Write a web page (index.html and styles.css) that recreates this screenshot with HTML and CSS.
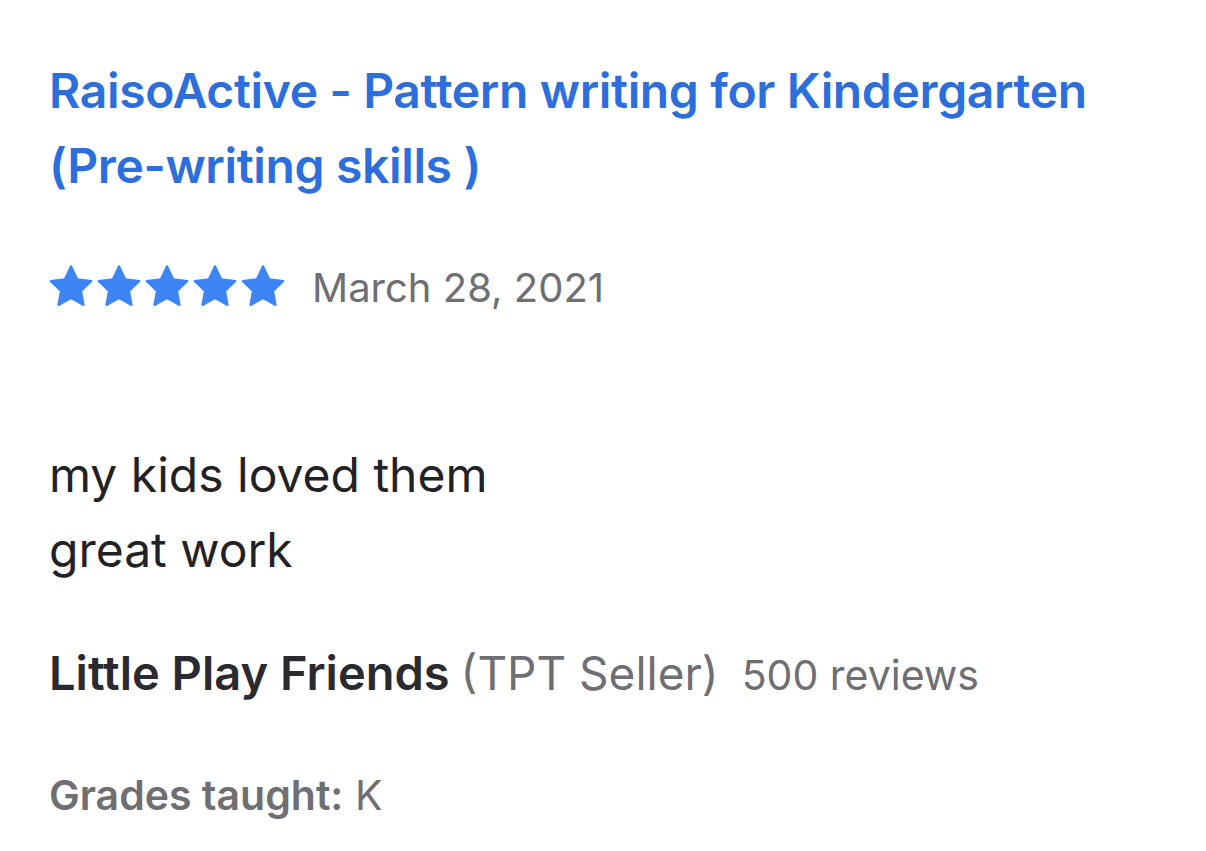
FILE: index.html
```html
<!DOCTYPE html>
<html>
<head>
<meta charset="utf-8">
<link rel="stylesheet" href="styles.css">
</head>
<body>
<div class="review">
  <h1 class="title">RaisoActive - Pattern writing for Kindergarten (Pre-writing skills )</h1>
  <div class="rating">
    <div class="stars">
      <svg class="star" viewBox="1.2 1.2 21.6 21.6"><path d="M12 1.8l3.05 6.35 6.95.95-5.05 4.85 1.25 6.9L12 17.5l-6.2 3.35 1.25-6.9L2 9.1l6.95-.95z" stroke="#3d85f5" stroke-width="1" stroke-linejoin="round"/></svg>
      <svg class="star" viewBox="1.2 1.2 21.6 21.6"><path d="M12 1.8l3.05 6.35 6.95.95-5.05 4.85 1.25 6.9L12 17.5l-6.2 3.35 1.25-6.9L2 9.1l6.95-.95z" stroke="#3d85f5" stroke-width="1" stroke-linejoin="round"/></svg>
      <svg class="star" viewBox="1.2 1.2 21.6 21.6"><path d="M12 1.8l3.05 6.35 6.95.95-5.05 4.85 1.25 6.9L12 17.5l-6.2 3.35 1.25-6.9L2 9.1l6.95-.95z" stroke="#3d85f5" stroke-width="1" stroke-linejoin="round"/></svg>
      <svg class="star" viewBox="1.2 1.2 21.6 21.6"><path d="M12 1.8l3.05 6.35 6.95.95-5.05 4.85 1.25 6.9L12 17.5l-6.2 3.35 1.25-6.9L2 9.1l6.95-.95z" stroke="#3d85f5" stroke-width="1" stroke-linejoin="round"/></svg>
      <svg class="star" viewBox="1.2 1.2 21.6 21.6"><path d="M12 1.8l3.05 6.35 6.95.95-5.05 4.85 1.25 6.9L12 17.5l-6.2 3.35 1.25-6.9L2 9.1l6.95-.95z" stroke="#3d85f5" stroke-width="1" stroke-linejoin="round"/></svg>
    </div>
    <span class="date">March 28, 2021</span>
  </div>
  <p class="body">my kids loved them<br>great work</p>
  <div class="seller">
    <span class="name">Little Play Friends</span>
    <span class="role">(TPT Seller)</span>
    <span class="count">500 reviews</span>
  </div>
  <div class="grades"><span class="label">Grades taught:</span> K</div>
</div>
</body>
</html>
```
FILE: styles.css
```css
html, body {
  margin: 0;
  padding: 0;
  background: #ffffff;
}
body {
  font-family: Inter, "Noto Sans", sans-serif;
}
.review {
  padding: 53px 0 0 49px;
}
.title {
  margin: 0;
  font-size: 48px;
  line-height: 75px;
  font-weight: 600;
  color: #2c6fdc;
  width: 1100px;
  letter-spacing: -0.35px;
}
.rating {
  display: flex;
  align-items: center;
  margin-top: 60px;
  height: 48px;
}
.stars {
  display: flex;
  gap: 4px;
}
.star {
  width: 44px;
  height: 44px;
  fill: #3d85f5;
}
.date {
  margin-left: 27px;
  font-size: 40px;
  color: #6e6e73;
}
.body {
  margin: 126px 0 0 0;
  font-size: 48px;
  line-height: 75px;
  color: #222226;
}
.seller {
  margin-top: 58px;
  display: flex;
  align-items: baseline;
  font-size: 47px;
  line-height: 56px;
}
.name {
  font-weight: 600;
  color: #2a2a30;
}
.role {
  margin-left: 11px;
  color: #6e6e73;
  font-size: 46px;
}
.count {
  margin-left: 23px;
  font-size: 41px;
  color: #6e6e73;
}
.grades {
  margin-top: 67px;
  font-size: 41px;
  line-height: 50px;
  color: #6e6e73;
}
.label {
  font-weight: 600;
}
```
